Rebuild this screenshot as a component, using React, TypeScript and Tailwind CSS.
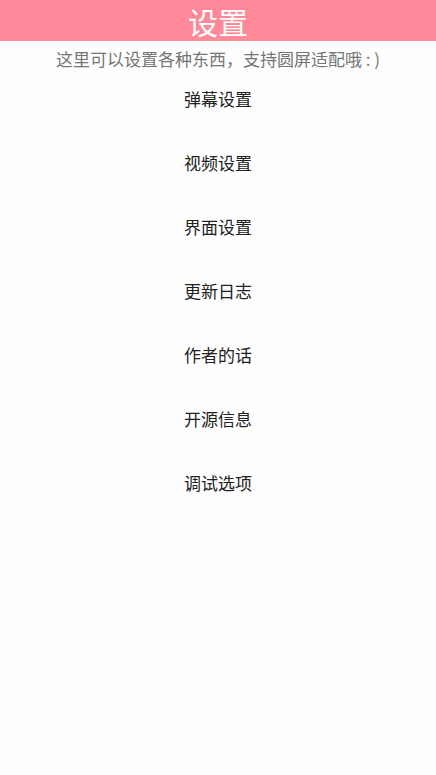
const items = ["弹幕设置", "视频设置", "界面设置", "更新日志", "作者的话", "开源信息", "调试选项"]

export default function App() {
  return (
    <div
      className="min-h-[775px] w-full bg-[#fefefe]"
      style={{ fontFamily: '"Noto Sans CJK SC", "Noto Sans", sans-serif' }}
    >
      {/* Header */}
      <div className="flex h-[41px] items-center justify-center bg-[#ff8899]">
        <h1 className="text-[30px] leading-none text-white">设置</h1>
      </div>

      {/* Subtitle */}
      <p className="pt-[6px] text-center text-[17px] leading-[24px] text-[#757575]">
        这里可以设置各种东西，支持圆屏适配哦 : )
      </p>

      {/* Menu */}
      <div className="flex flex-col items-center gap-10 pt-4">
        {items.map((item) => (
          <button key={item} type="button" className="text-[17px] leading-[24px] text-[#212121]">
            {item}
          </button>
        ))}
      </div>
    </div>
  )
}
